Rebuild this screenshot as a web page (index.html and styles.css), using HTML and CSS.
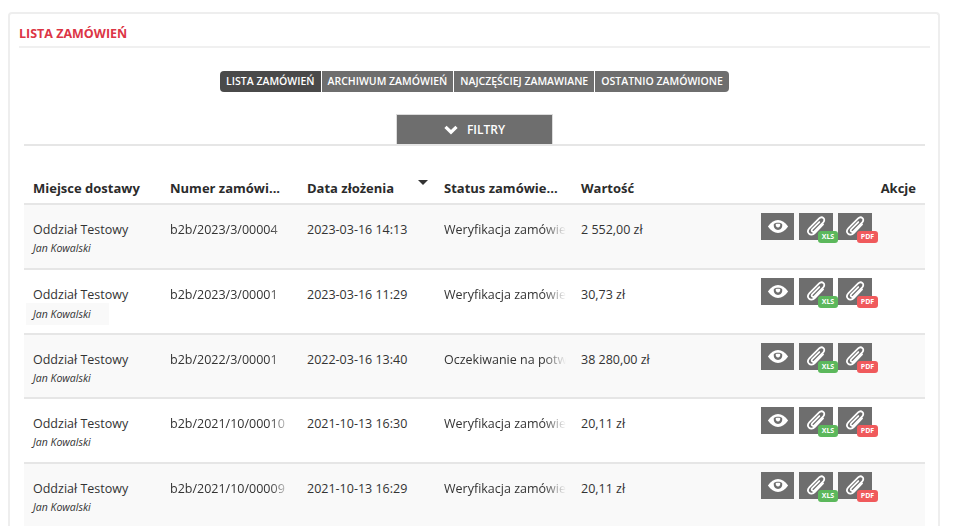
FILE: index.html
```html
<!DOCTYPE html>
<html lang="pl">
<head>
<meta charset="utf-8">
<title>Lista zamówień</title>
<link rel="stylesheet" href="styles.css">
</head>
<body>
<svg class="defs" width="0" height="0" aria-hidden="true">
  <symbol id="eye" viewBox="0 0 24 16">
    <path fill="#fff" d="M1 8C4 3.5 8 1 12 1s8 2.500 11 7c-3 4.500-7 7-11 7S4 12.500 1 8z"/>
    <path fill="#6e6e6e" d="M7.500 5.200C6.800 9 9 11.700 12 11.700s5.200-2.700 4.500-6.500C15.300 4.300 13.800 3.800 12 3.800s-3.300.5-4.500 1.400z"/>
    <path fill="#fff" d="M9.600 5.300c1.200-.5 3.600-.5 4.800 0 .4 2.300-.8 3.800-2.400 3.800S9.200 7.600 9.600 5.300z"/>
  </symbol>
  <symbol id="clip" viewBox="0 0 24 24">
    <path fill="none" stroke="#fff" stroke-width="2" stroke-linecap="round" d="M19.500 9.500 10 19.500c-2 2-5 2.200-6.600.6-1.600-1.600-1.300-4.300.6-6.300L15 2.800c1.400-1.400 3.600-1.700 5-.4 1.400 1.300 1.100 3.400-.3 4.900L9.600 17.500c-.8.800-2 .9-2.700.2-.7-.7-.5-1.800.3-2.600l8-8.200"/>
  </symbol>
</svg>
<main class="card">
  <h1 class="title">LISTA ZAMÓWIEŃ</h1>
  <nav class="tabs">
    <a class="tab active">LISTA ZAMÓWIEŃ</a>
    <a class="tab">ARCHIWUM ZAMÓWIEŃ</a>
    <a class="tab">NAJCZĘŚCIEJ ZAMAWIANE</a>
    <a class="tab">OSTATNIO ZAMÓWIONE</a>
  </nav>
  <section class="filters">
    <button class="filter-btn">
      <svg class="chev" viewBox="0 0 14 10" width="14" height="10"><path fill="none" stroke="#fff" stroke-width="3.200" d="M1.500 1.800 7 7.200l5.500-5.400"/></svg>
      <span>FILTRY</span>
    </button>
  </section>
  <section class="table">
    <div class="row head">
      <div class="cell">Miejsce dostawy</div>
      <div class="cell">Numer zamówi...</div>
      <div class="cell sort">Data złożenia<i class="caret"></i></div>
      <div class="cell">Status zamówie...</div>
      <div class="cell">Wartość</div>
      <div class="cell akcje">Akcje</div>
    </div>

    <div class="row body odd">
      <div class="cell place">Oddział Testowy<em>Jan Kowalski</em></div>
      <div class="cell fade">b2b/2023/3/00004</div>
      <div class="cell">2023-03-16 14:13</div>
      <div class="cell fade">Weryfikacja zamówienia</div>
      <div class="cell">2 552,00 zł</div>
      <div class="actions">
        <a class="act"><svg class="ic-eye"><use href="#eye"/></svg></a>
        <a class="act"><svg class="ic-clip"><use href="#clip"/></svg><b class="badge xls">XLS</b></a>
        <a class="act"><svg class="ic-clip"><use href="#clip"/></svg><b class="badge pdf">PDF</b></a>
      </div>
    </div>

    <div class="row body">
      <div class="cell place">Oddział Testowy<em class="hl">Jan Kowalski</em></div>
      <div class="cell fade">b2b/2023/3/00001</div>
      <div class="cell">2023-03-16 11:29</div>
      <div class="cell fade">Weryfikacja zamówienia</div>
      <div class="cell">30,73 zł</div>
      <div class="actions">
        <a class="act"><svg class="ic-eye"><use href="#eye"/></svg></a>
        <a class="act"><svg class="ic-clip"><use href="#clip"/></svg><b class="badge xls">XLS</b></a>
        <a class="act"><svg class="ic-clip"><use href="#clip"/></svg><b class="badge pdf">PDF</b></a>
      </div>
    </div>

    <div class="row body odd">
      <div class="cell place">Oddział Testowy<em>Jan Kowalski</em></div>
      <div class="cell fade">b2b/2022/3/00001</div>
      <div class="cell">2022-03-16 13:40</div>
      <div class="cell fade">Oczekiwanie na potwierdzenie</div>
      <div class="cell">38 280,00 zł</div>
      <div class="actions">
        <a class="act"><svg class="ic-eye"><use href="#eye"/></svg></a>
        <a class="act"><svg class="ic-clip"><use href="#clip"/></svg><b class="badge xls">XLS</b></a>
        <a class="act"><svg class="ic-clip"><use href="#clip"/></svg><b class="badge pdf">PDF</b></a>
      </div>
    </div>

    <div class="row body">
      <div class="cell place">Oddział Testowy<em>Jan Kowalski</em></div>
      <div class="cell fade">b2b/2021/10/00010</div>
      <div class="cell">2021-10-13 16:30</div>
      <div class="cell fade">Weryfikacja zamówienia</div>
      <div class="cell">20,11 zł</div>
      <div class="actions">
        <a class="act"><svg class="ic-eye"><use href="#eye"/></svg></a>
        <a class="act"><svg class="ic-clip"><use href="#clip"/></svg><b class="badge xls">XLS</b></a>
        <a class="act"><svg class="ic-clip"><use href="#clip"/></svg><b class="badge pdf">PDF</b></a>
      </div>
    </div>

    <div class="row body odd">
      <div class="cell place">Oddział Testowy<em>Jan Kowalski</em></div>
      <div class="cell fade">b2b/2021/10/00009</div>
      <div class="cell">2021-10-13 16:29</div>
      <div class="cell fade">Weryfikacja zamówienia</div>
      <div class="cell">20,11 zł</div>
      <div class="actions">
        <a class="act"><svg class="ic-eye"><use href="#eye"/></svg></a>
        <a class="act"><svg class="ic-clip"><use href="#clip"/></svg><b class="badge xls">XLS</b></a>
        <a class="act"><svg class="ic-clip"><use href="#clip"/></svg><b class="badge pdf">PDF</b></a>
      </div>
    </div>
  </section>
</main>
</body>
</html>
```

FILE: styles.css
```css
* { box-sizing: border-box; }
html, body { height: 100%; overflow: hidden; }
body {
  margin: 0;
  padding: 12px 18px 0 8px;
  background: #fff;
  color: #333;
  font-family: "Open Sans", "Liberation Sans", sans-serif;
  font-size: 12.500px;
}
.defs { position: absolute; }
.card {
  border: 2px solid #eee;
  border-bottom: 0;
  border-radius: 4px 4px 0 0;
  padding: 0 8px 0 9px;
  height: 600px;
}
.title {
  margin: 0;
  height: 34px;
  padding-top: 12px;
  font-size: 12.500px;
  line-height: 16px;
  font-weight: 700;
  color: #dc3545;
  border-bottom: 2px solid #f0f0f0;
}
.tabs {
  display: flex;
  justify-content: center;
  gap: 1px;
  margin-top: 23px;
  height: 21px;
}
.tab {
  display: block;
  padding: 0 6px;
  background: #6e6e6e;
  color: #fff;
  font-size: 10.500px;
  font-weight: 600;
  line-height: 21px;
  white-space: nowrap;
}
.tab.active { background: #4a4a4a; border-radius: 4px 0 0 4px; }
.tab:last-child { border-radius: 0 4px 4px 0; }
.filters {
  margin: 0 5px;
  height: 54px;
  display: flex;
  justify-content: center;
  align-items: flex-end;
  border-bottom: 2px solid #e6e6e6;
  padding-bottom: 0;
}
.filter-btn {
  display: flex;
  align-items: center;
  justify-content: center;
  gap: 9px;
  width: 157px;
  height: 30px;
  padding: 0;
  background: #6e6e6e;
  border: 1px solid #dcdcdc;
  border-bottom: 0;
  color: #fff;
  font: 600 12px "Open Sans", "Liberation Sans", sans-serif;
}
.chev { display: block; }
.table { margin: 24px 5px 0; }
.row {
  display: grid;
  grid-template-columns: repeat(5, 137px) 1fr;
}
.row.head { height: 35px; border-bottom: 2px solid #e6e6e6; }
.row.head .cell { font-weight: 700; font-size: 13px; color: #2b2b2b; padding-top: 9px; line-height: 18px; }
.row.body { height: 64.800px; border-bottom: 2px solid #e6e6e6; }
.row.body.odd { background: #f9f9f9; }
.cell {
  padding: 16px 9px 0;
  line-height: 18px;
  white-space: nowrap;
  overflow: hidden;
  min-width: 0;
}
.sort { position: relative; }
.caret {
  position: absolute;
  top: 10px;
  right: 7px;
  border: 5px solid transparent;
  border-top-color: #333;
  border-bottom: 0;
}
.akcje { text-align: right; }
.place em {
  display: block;
  width: max-content;
  font-size: 10.500px;
  line-height: 16px;
  margin-top: 1px;
}
.place em.hl {
  background: #f9f9f9;
  padding: 3px 18px 3px 7px;
  margin: -1px 0 0 -7px;
}
.fade {
  -webkit-mask-image: linear-gradient(to right, #000 calc(100% - 28px), transparent calc(100% - 6px));
  mask-image: linear-gradient(to right, #000 calc(100% - 28px), transparent calc(100% - 6px));
}
.actions {
  display: flex;
  gap: 5px;
  align-items: flex-start;
  padding: 8px 0 0 52px;
}
.act {
  position: relative;
  display: flex;
  align-items: center;
  justify-content: center;
  width: 34px;
  height: 27px;
  background: #6e6e6e;
}
.act:first-child { width: 33px; }
.ic-eye { width: 22px; height: 15px; }
.ic-clip { width: 21px; height: 21px; }
.badge {
  position: absolute;
  top: 18px;
  left: 19px;
  width: 20px;
  height: 12px;
  border-radius: 3px;
  color: #fff;
  font-size: 7px;
  line-height: 12px;
  font-weight: 700;
  text-align: center;
}
.badge.xls { background: #5cb85c; }
.badge.pdf { background: #f05a5c; width: 21px; }
```
